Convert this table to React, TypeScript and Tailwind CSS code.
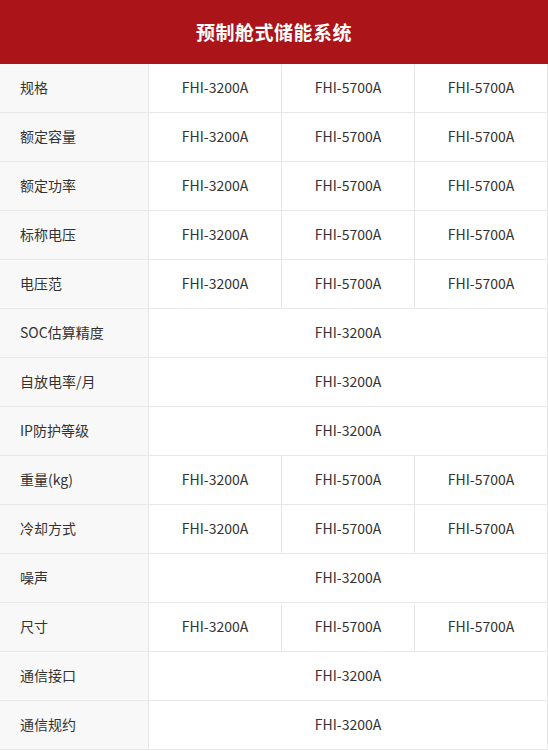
import React from "react";

type Row = {
  label: string;
  values: string[]; // 3 values, or 1 spanning all columns
};

const triple = ["FHI-3200A", "FHI-5700A", "FHI-5700A"];

const rows: Row[] = [
  { label: "规格", values: triple },
  { label: "额定容量", values: triple },
  { label: "额定功率", values: triple },
  { label: "标称电压", values: triple },
  { label: "电压范", values: triple },
  { label: "SOC估算精度", values: ["FHI-3200A"] },
  { label: "自放电率/月", values: ["FHI-3200A"] },
  { label: "IP防护等级", values: ["FHI-3200A"] },
  { label: "重量(kg)", values: triple },
  { label: "冷却方式", values: triple },
  { label: "噪声", values: ["FHI-3200A"] },
  { label: "尺寸", values: triple },
  { label: "通信接口", values: ["FHI-3200A"] },
  { label: "通信规约", values: ["FHI-3200A"] },
];

const App = () => {
  return (
    <div
      className="w-[548px] bg-white text-[#333] text-[14px]"
      style={{ fontFamily: '"Noto Sans CJK SC", "Noto Sans", sans-serif' }}
    >
      {/* Header */}
      <div className="h-16 bg-[#ab1419] flex items-center justify-center">
        <h1 className="text-white text-[19px] font-bold tracking-[0.5px]">预制舱式储能系统</h1>
      </div>
      {/* Spec table */}
      <div className="grid grid-cols-[149px_1fr_1fr_1fr]">
        {rows.map((row) => (
          <React.Fragment key={row.label}>
            <div className="h-[49px] flex items-center pl-5 pb-[2px] bg-[#f8f8f8] border-r border-b border-[#e8e8e8]">
              {row.label}
            </div>
            {row.values.length === 1 ? (
              <div className="col-span-3 h-[49px] flex items-center justify-center pb-[2px] border-r border-b border-[#e8e8e8]">
                {row.values[0]}
              </div>
            ) : (
              row.values.map((v, i) => (
                <div
                  key={i}
                  className="h-[49px] flex items-center justify-center pb-[2px] border-r border-b border-[#e8e8e8]"
                >
                  {v}
                </div>
              ))
            )}
          </React.Fragment>
        ))}
      </div>
    </div>
  );
};

export default App;
